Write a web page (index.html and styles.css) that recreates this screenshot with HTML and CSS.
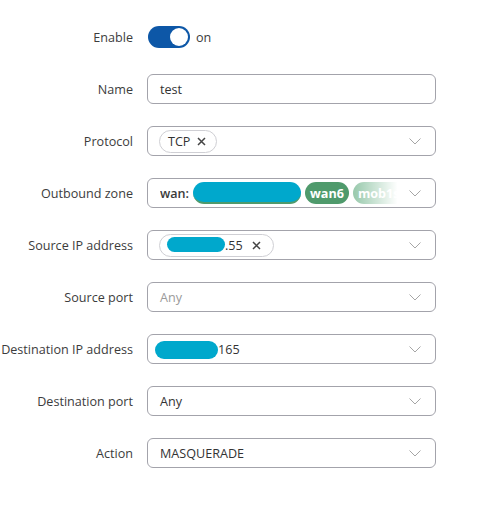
FILE: index.html
```html
<!DOCTYPE html>
<html lang="en">
<head>
  <meta charset="UTF-8" />
  <title>Rule settings</title>
  <link rel="stylesheet" href="styles.css">
</head>
<body>

<form class="rule-form">
  <div class="row">
    <label class="row-label">Enable</label>
    <div class="toggle-wrap">
      <span class="toggle"><span class="knob"></span></span>
      <span class="toggle-text">on</span>
    </div>
  </div>

  <div class="row">
    <label class="row-label">Name</label>
    <div class="field"><span class="value">test</span></div>
  </div>

  <div class="row">
    <label class="row-label">Protocol</label>
    <div class="field">
      <span class="chip">TCP <svg class="chip-x" width="9" height="9" viewBox="0 0 9 9"><path d="M1 1L8 8M8 1L1 8" /></svg></span>
      <svg class="chevron" width="12" height="7" viewBox="0 0 12 7"><polyline points="0.5,0.5 6,6 11.5,0.5" /></svg>
    </div>
  </div>

  <div class="row">
    <label class="row-label">Outbound zone</label>
    <div class="field">
      <div class="zones">
        <span class="zone-name">wan:</span>
        <span class="zone-chip hidden-chip"></span>
        <span class="zone-chip">wan6</span>
        <span class="zone-chip light">mob1s1a1</span>
        <span class="fade-out"></span>
      </div>
      <svg class="chevron" width="12" height="7" viewBox="0 0 12 7"><polyline points="0.5,0.5 6,6 11.5,0.5" /></svg>
    </div>
  </div>

  <div class="row">
    <label class="row-label">Source IP address</label>
    <div class="field">
      <span class="chip ip-chip"><span class="blob blob-src"></span>.55 <svg class="chip-x" width="9" height="9" viewBox="0 0 9 9"><path d="M1 1L8 8M8 1L1 8" /></svg></span>
      <svg class="chevron" width="12" height="7" viewBox="0 0 12 7"><polyline points="0.5,0.5 6,6 11.5,0.5" /></svg>
    </div>
  </div>

  <div class="row">
    <label class="row-label">Source port</label>
    <div class="field">
      <span class="value placeholder">Any</span>
      <svg class="chevron" width="12" height="7" viewBox="0 0 12 7"><polyline points="0.5,0.5 6,6 11.5,0.5" /></svg>
    </div>
  </div>

  <div class="row">
    <label class="row-label">Destination IP address</label>
    <div class="field tight">
      <span class="value"><span class="blob blob-dst"></span>165</span>
      <svg class="chevron" width="12" height="7" viewBox="0 0 12 7"><polyline points="0.5,0.5 6,6 11.5,0.5" /></svg>
    </div>
  </div>

  <div class="row">
    <label class="row-label">Destination port</label>
    <div class="field">
      <span class="value">Any</span>
      <svg class="chevron" width="12" height="7" viewBox="0 0 12 7"><polyline points="0.5,0.5 6,6 11.5,0.5" /></svg>
    </div>
  </div>

  <div class="row">
    <label class="row-label">Action</label>
    <div class="field">
      <span class="value">MASQUERADE</span>
      <svg class="chevron" width="12" height="7" viewBox="0 0 12 7"><polyline points="0.5,0.5 6,6 11.5,0.5" /></svg>
    </div>
  </div>
</form>

</body>
</html>
```

FILE: styles.css
```css
:root {
  --text: #333333;
  --label: #3c3c3c;
  --muted: #9a9a9a;
  --border: #a3a3ab;
  --blue: #0d57a7;
  --green: #4f9a6c;
  --green-light: #9ccbaf;
  --redact: #00a8cc;
}

body {
  margin: 0;
  background: #ffffff;
  font-family: 'Open Sans', 'Noto Sans', sans-serif;
  font-size: 12.6px;
  color: var(--text);
}

.rule-form {
  display: flex;
  flex-direction: column;
  gap: 22px;
  padding-top: 22px;
}

.row {
  display: grid;
  grid-template-columns: 133px 289px;
  column-gap: 14px;
  align-items: center;
  height: 30px;
}

.row-label {
  text-align: right;
  color: var(--label);
  white-space: nowrap;
}

.toggle-wrap {
  display: flex;
  align-items: center;
  gap: 6px;
  padding-left: 1px;
}

.toggle {
  display: flex;
  justify-content: flex-end;
  align-items: center;
  width: 42px;
  height: 22px;
  border-radius: 11px;
  background: var(--blue);
  box-sizing: border-box;
  padding: 2px;
}

.knob {
  width: 18px;
  height: 18px;
  border-radius: 50%;
  background: #ffffff;
}

.toggle-text {
  color: var(--label);
}

.field {
  display: flex;
  align-items: center;
  height: 30px;
  box-sizing: border-box;
  border: 1px solid var(--border);
  border-radius: 6px;
  padding: 0 14px 0 12px;
  background: #ffffff;
}

.field.tight {
  padding-left: 7px;
}

.value {
  display: flex;
  align-items: center;
  flex: 1;
}

.placeholder {
  color: var(--muted);
}

.chevron {
  margin-left: auto;
  flex-shrink: 0;
}

.chevron polyline {
  fill: none;
  stroke: #a6a6a6;
  stroke-width: 1;
}

.chip {
  display: inline-flex;
  align-items: center;
  gap: 7px;
  height: 23px;
  margin-left: -1px;
  box-sizing: border-box;
  border: 1px solid #cfcfd4;
  border-radius: 12px;
  padding: 0 10px 0 8px;
}

.chip-x path {
  fill: none;
  stroke: #444444;
  stroke-width: 1.5;
}

.ip-chip {
  gap: 0;
  padding-left: 7px;
  padding-right: 12px;
}

.ip-chip .chip-x {
  margin-left: 9px;
}

.blob {
  display: inline-block;
  height: 15px;
  background: var(--redact);
  border-radius: 8px;
}

.blob-src {
  width: 58px;
  margin-top: -2px;
}

.blob-dst {
  width: 63px;
  height: 18px;
  border-radius: 9px;
  margin-top: 2px;
}

.zones {
  position: relative;
  display: flex;
  align-items: center;
  gap: 4px;
  flex: 1;
  overflow: hidden;
  margin-right: 4px;
}

.zone-name {
  font-weight: 600;
  color: #3a3a3a;
  flex-shrink: 0;
}

.zone-chip {
  display: inline-flex;
  align-items: center;
  flex-shrink: 0;
  height: 22px;
  padding: 0 5px;
  border-radius: 11px;
  background: var(--green);
  color: #ffffff;
  font-weight: 700;
  white-space: nowrap;
}

.zone-chip.hidden-chip {
  width: 108px;
  background: var(--redact);
  border-bottom: 2px solid var(--green);
  box-sizing: border-box;
}

.zone-chip.light {
  background: var(--green-light);
}

.fade-out {
  position: absolute;
  top: 0;
  right: 0;
  width: 50px;
  height: 100%;
  background: linear-gradient(to right, rgba(255, 255, 255, 0), #ffffff 85%);
}
```
